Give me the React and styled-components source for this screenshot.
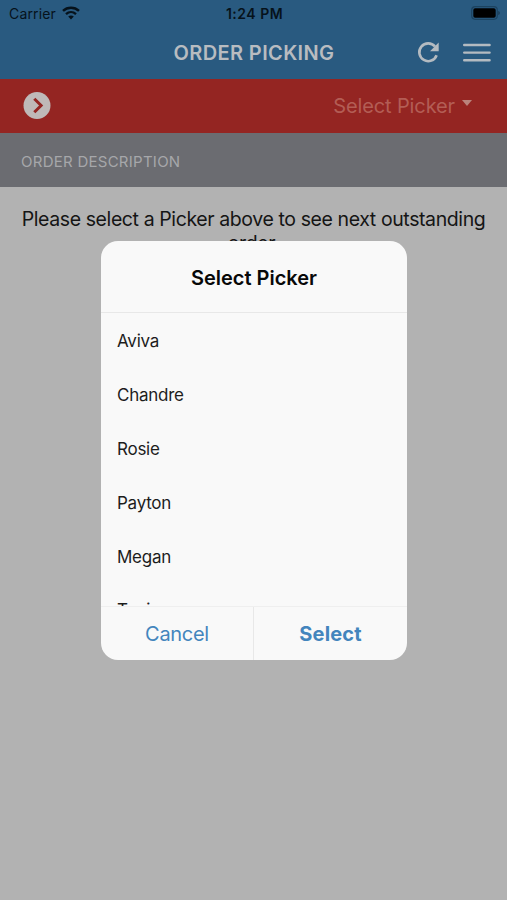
import React, { useState } from "react";
import styled, { createGlobalStyle } from "styled-components";

const GlobalStyle = createGlobalStyle`
  * {
    box-sizing: border-box;
  }
  body {
    margin: 0;
    background: #b2b2b2;
    font-family: Inter, "Liberation Sans", sans-serif;
  }
  button {
    font-family: inherit;
    border: none;
    background: none;
    padding: 0;
    cursor: pointer;
  }
`;

const Screen = styled.div`
  position: relative;
  height: 900px;
  overflow: hidden;
  background: #b2b2b2;
`;

const Header = styled.header`
  height: 79px;
  background: #295a80;
`;

const StatusBar = styled.div`
  display: grid;
  grid-template-columns: 1fr auto 1fr;
  align-items: center;
  height: 26px;
  padding: 0 7px 0 9px;
  color: #06121b;
`;

const Carrier = styled.div`
  display: flex;
  align-items: center;
  gap: 6px;
  font-size: 14px;
  letter-spacing: 0.15px;
`;

const Time = styled.div`
  font-size: 14px;
  font-weight: 600;
  letter-spacing: 0.5px;
`;

const Battery = styled.svg`
  justify-self: end;
`;

const NavBar = styled.div`
  display: grid;
  grid-template-columns: 1fr auto 1fr;
  align-items: center;
  height: 53px;
  padding: 0 16px;
`;

const Title = styled.h1`
  grid-column: 2;
  margin: 0 0 0 1px;
  color: #b8bcc0;
  font-size: 20px;
  font-weight: 600;
  letter-spacing: 0.38px;
`;

const NavActions = styled.div`
  display: flex;
  align-items: center;
  justify-content: flex-end;
  gap: 23px;
`;

const IconButton = styled.button`
  display: flex;
  color: #b4bbc1;
`;

const PickerBar = styled.div`
  display: flex;
  align-items: center;
  justify-content: space-between;
  height: 54px;
  padding: 0 35px 0 23px;
  background: #942522;
`;

const PickerSelect = styled.button`
  display: flex;
  align-items: center;
  gap: 7px;
  color: #b35d55;
  font-size: 20px;
  letter-spacing: -0.12px;
`;

const Caret = styled.span`
  margin-top: -6px;
  border: 5.5px solid transparent;
  border-top: 6px solid #ba837c;
  border-bottom: none;
`;

const SectionHeader = styled.div`
  height: 54px;
  padding-left: 21px;
  background: #6b6c71;
  color: #a6a7aa;
  font-size: 15px;
  letter-spacing: 0.26px;
  line-height: 57px;
`;

const Message = styled.p`
  margin: 0;
  padding: 20px 16px;
  color: #151515;
  font-size: 19.5px;
  letter-spacing: -0.4px;
  line-height: 24px;
  text-align: center;
`;

const Alert = styled.div`
  position: absolute;
  top: 241px;
  left: 101px;
  display: flex;
  flex-direction: column;
  width: 306px;
  height: 419px;
  border-radius: 17px;
  background: #f9f9f9;
  overflow: hidden;
`;

const AlertTitle = styled.h2`
  flex: none;
  height: 72px;
  margin: 0;
  border-bottom: 1px solid #e8e8e8;
  color: #080808;
  font-size: 20px;
  font-weight: 600;
  line-height: 74px;
  text-align: center;
`;

const PickerList = styled.div`
  flex: 1;
  padding-top: 1px;
  overflow: hidden;
`;

const PickerOption = styled.button`
  display: block;
  width: 100%;
  height: 53.9px;
  padding-left: 16px;
  color: #1d1d1d;
  font-size: 17px;
  letter-spacing: -0.25px;
  text-align: left;
`;

const AlertButtons = styled.div`
  display: flex;
  flex: none;
  height: 54px;
  border-top: 1px solid #efefef;
`;

const AlertButton = styled.button`
  width: 152px;
  color: #4385bd;
  font-size: 20px;
  font-weight: ${({ $strong }) => ($strong ? 700 : 400)};
  letter-spacing: ${({ $strong }) => ($strong ? "0.15px" : "-0.3px")};

  & + & {
    flex: 1;
    border-left: 1px solid #e8e8e8;
  }
`;

const pickers = ["Aviva", "Chandre", "Rosie", "Payton", "Megan", "Toni"];

function WifiIcon() {
  return (
    <svg width="18" height="14" viewBox="0 0 18 14" fill="none">
      <path d="M1 4.8C5.6.6 12.4.6 17 4.8" stroke="currentColor" strokeWidth="2.5" />
      <path d="M4 8.1c3-2.7 7-2.7 10 0" stroke="currentColor" strokeWidth="2.4" />
      <path d="M6.2 10.6c1.6-1.5 4-1.5 5.6 0L9 13.6z" fill="currentColor" />
    </svg>
  );
}

function BatteryIcon() {
  return (
    <Battery width="29" height="14" viewBox="0 0 29 14">
      <rect x=".7" y=".7" width="25.6" height="12.6" rx="3.5" fill="none" stroke="#1c4360" strokeWidth="1.2" />
      <rect x="2.3" y="2.3" width="22.4" height="9.4" rx="1.8" fill="#000" />
      <path d="M27.3 5v4c2-.7 2-3.3 0-4z" fill="#1c3b53" />
    </Battery>
  );
}

function RefreshIcon() {
  return (
    <svg width="22" height="22" viewBox="0 0 22 22" fill="none">
      <path d="M19.6 13.2A8.9 8.9 0 1 1 18 4.5" stroke="currentColor" strokeWidth="2.6" />
      <path d="M21.7.5v8.7H13z" fill="currentColor" />
    </svg>
  );
}

function MenuIcon() {
  return (
    <svg width="29" height="19" viewBox="0 0 29 19" stroke="currentColor" strokeWidth="2.4" strokeLinecap="round">
      <path d="M2.2 2h25.4M2.2 9.6h25.4M2.2 17.2h25.4" />
    </svg>
  );
}

function ForwardIcon() {
  return (
    <svg width="28" height="28" viewBox="0 0 28 28" fill="none">
      <circle cx="14" cy="13.5" r="13.5" fill="#bfb9b8" />
      <path d="M11.3 6.8l6.8 6.7-6.8 6.7" stroke="#942522" strokeWidth="3" />
    </svg>
  );
}

function App() {
  const [open, setOpen] = useState(true);
  const [selected, setSelected] = useState(null);

  return (
    <Screen>
      <GlobalStyle />
      <Header>
        <StatusBar>
          <Carrier>
            Carrier
            <WifiIcon />
          </Carrier>
          <Time>1:24 PM</Time>
          <BatteryIcon />
        </StatusBar>
        <NavBar>
          <Title>ORDER PICKING</Title>
          <NavActions>
            <IconButton>
              <RefreshIcon />
            </IconButton>
            <IconButton>
              <MenuIcon />
            </IconButton>
          </NavActions>
        </NavBar>
      </Header>
      <PickerBar>
        <IconButton>
          <ForwardIcon />
        </IconButton>
        <PickerSelect onClick={() => setOpen(true)}>
          {selected || "Select Picker"}
          <Caret />
        </PickerSelect>
      </PickerBar>
      <SectionHeader>ORDER DESCRIPTION</SectionHeader>
      <Message>Please select a Picker above to see next outstanding order.</Message>
      {open && (
        <Alert>
          <AlertTitle>Select Picker</AlertTitle>
          <PickerList>
            {pickers.map((name) => (
              <PickerOption key={name} onClick={() => setSelected(name)}>
                {name}
              </PickerOption>
            ))}
          </PickerList>
          <AlertButtons>
            <AlertButton onClick={() => setOpen(false)}>Cancel</AlertButton>
            <AlertButton $strong onClick={() => setOpen(false)}>
              Select
            </AlertButton>
          </AlertButtons>
        </Alert>
      )}
    </Screen>
  );
}

export default App;
